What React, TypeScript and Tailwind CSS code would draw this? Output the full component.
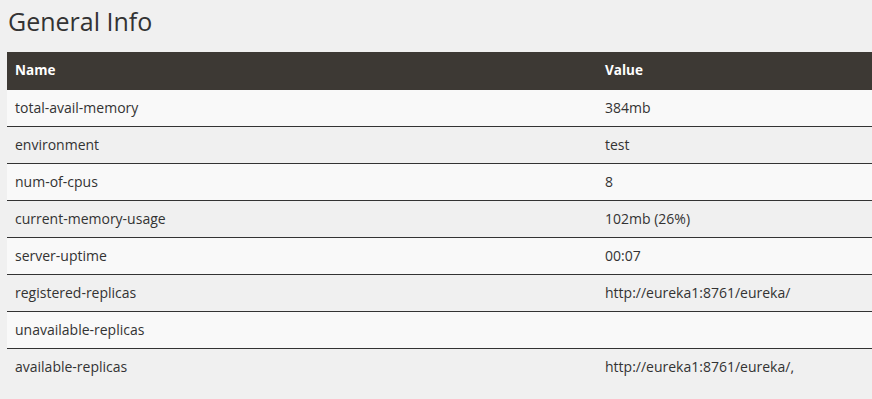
import React from "react";

const rows: [string, string][] = [
  ["total-avail-memory", "384mb"],
  ["environment", "test"],
  ["num-of-cpus", "8"],
  ["current-memory-usage", "102mb (26%)"],
  ["server-uptime", "00:07"],
  ["registered-replicas", "http://eureka1:8761/eureka/"],
  ["unavailable-replicas", ""],
  ["available-replicas", "http://eureka1:8761/eureka/,"],
];

export default function App() {
  return (
    <div
      className="w-[872px] h-[399px] overflow-hidden bg-[#f0f0f0] text-[#333]"
      style={{ fontFamily: '"Open Sans", "Noto Sans", sans-serif' }}
    >
      <h1 className="pl-[8px] pt-[5px] h-[52px] text-[25px] leading-[32px] text-[#333]">
        General Info
      </h1>
      <div className="ml-[7px] w-[865px] text-[14px]">
        <div className="grid grid-cols-[590px_1fr] h-[38px] items-center pb-[2px] bg-[#3d3934] text-white font-bold text-[13.5px]">
          <div className="pl-[8px]">Name</div>
          <div className="pl-[8px]">Value</div>
        </div>
        {rows.map(([k, v], i) => (
          <div
            key={k}
            className={
              "grid grid-cols-[590px_1fr] h-[37px] items-center pb-[2px] " +
              (i % 2 === 0 ? "bg-[#f9f9f9]" : "bg-[#f0f0f0]") +
              (i < rows.length - 1 ? " border-b border-[#333]" : "")
            }
          >
            <div className="pl-[8px]">{k}</div>
            <div className="pl-[8px]">{v}</div>
          </div>
        ))}
      </div>
    </div>
  );
}
